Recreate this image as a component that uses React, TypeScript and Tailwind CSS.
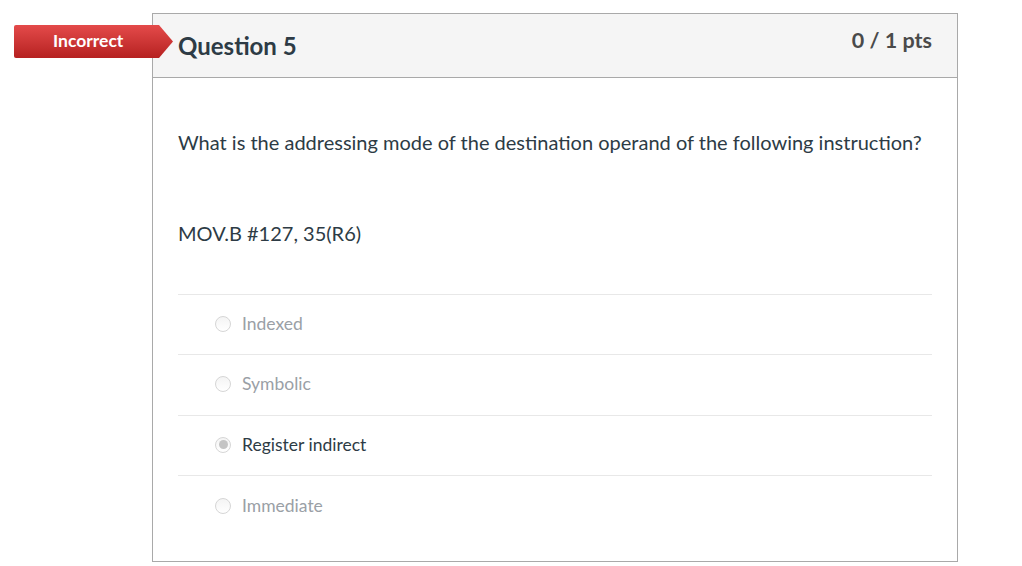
import React from "react";

const options = [
  { label: "Indexed", selected: false },
  { label: "Symbolic", selected: false },
  { label: "Register indirect", selected: true },
  { label: "Immediate", selected: false },
];

function Radio({ selected }: { selected: boolean }) {
  return (
    <span className="flex h-[16px] w-[16px] items-center justify-center rounded-full border border-[#d6d6d6] bg-gradient-to-b from-[#f4f4f4] to-white">
      {selected && <span className="h-[9px] w-[9px] rounded-full bg-[#c4c4c4]" />}
    </span>
  );
}

export default function App() {
  return (
    <div className="relative min-h-[566px] bg-white pt-[13px] font-['Lato','Open_Sans',sans-serif] text-[#2d3b45]">
      <div className="absolute left-[14px] top-[25px] flex h-[33px] w-[159px] items-center rounded-l-[2px] bg-gradient-to-b from-[#e44a4a] to-[#b62020] pl-[39px] text-[17.5px] font-bold text-white [clip-path:polygon(0_0,145px_0,159px_50%,145px_100%,0_100%)]">
        Incorrect
      </div>

      <div className="ml-[152px] flex h-[549px] w-[806px] flex-col border border-[#a9a9a9]">
        <div className="flex h-[64px] items-start justify-between border-b border-[#a9a9a9] bg-[#f5f5f5] px-[25px]">
          <h2 className="mt-[18px] text-[24px] font-bold leading-[28px]">Question 5</h2>
          <span className="mt-[13px] text-[21.5px] font-bold leading-[26px] text-[#4a4a4a]">0 / 1 pts</span>
        </div>

        <div className="px-[25px]">
          <p className="mt-[51px] text-[20px] leading-[26px]">
            What is the addressing mode of the destination operand of the following instruction?
          </p>
          <p className="mt-[65px] text-[20px] leading-[26px]">MOV.B #127, 35(R6)</p>

          <div className="mt-[48px] border-t border-[#e8e8e8]">
            {options.map((o, i) => (
              <div
                key={o.label}
                className={`flex h-[60.33px] items-center gap-[11px] pb-[1px] pl-[37px] ${i < options.length - 1 ? "border-b border-[#e8e8e8]" : ""}`}
              >
                <Radio selected={o.selected} />
                <span className={`text-[17.5px] ${o.selected ? "text-[#2d3b45]" : "text-[#9aa0a6]"}`}>
                  {o.label}
                </span>
              </div>
            ))}
          </div>
        </div>
      </div>
    </div>
  );
}
